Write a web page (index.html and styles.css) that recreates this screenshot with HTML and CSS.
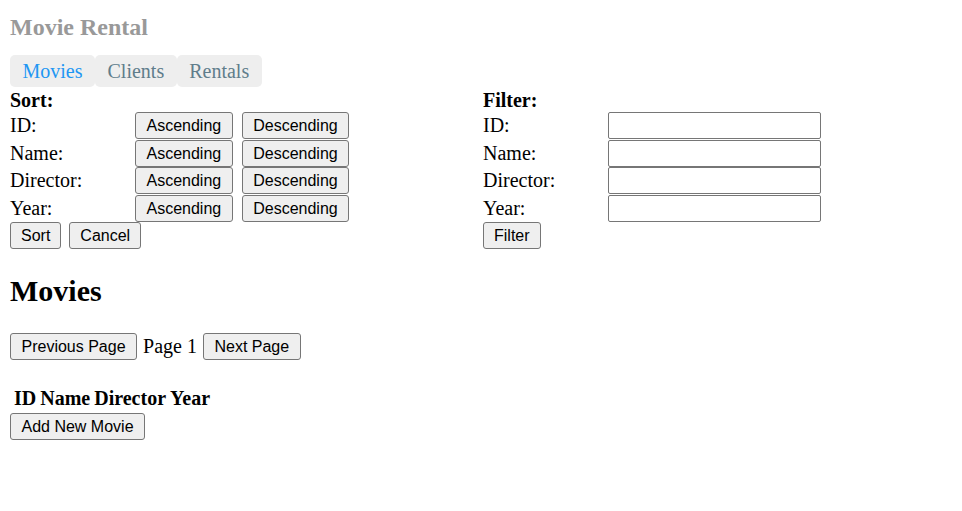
FILE: index.html
```html
<!DOCTYPE html>
<html>
<head>
<meta charset="utf-8">
<link rel="stylesheet" href="styles.css">
</head>
<body>
<div class="app">
  <h1 class="title">Movie Rental</h1>
  <nav class="tabs">
    <span class="tab active">Movies</span>
    <span class="tab">Clients</span>
    <span class="tab">Rentals</span>
  </nav>
  <div class="controls">
    <div class="panel sort">
      <div class="panel-title">Sort:</div>
      <div class="grid">
        <span class="label">ID:</span>
        <span class="pair"><button class="btn">Ascending</button><button class="btn">Descending</button></span>
        <span class="label">Name:</span>
        <span class="pair"><button class="btn">Ascending</button><button class="btn">Descending</button></span>
        <span class="label">Director:</span>
        <span class="pair"><button class="btn">Ascending</button><button class="btn">Descending</button></span>
        <span class="label">Year:</span>
        <span class="pair"><button class="btn">Ascending</button><button class="btn">Descending</button></span>
      </div>
      <div class="actions"><button class="btn">Sort</button><button class="btn">Cancel</button></div>
    </div>
    <div class="panel filter">
      <div class="panel-title">Filter:</div>
      <div class="grid">
        <span class="label">ID:</span><input class="field" type="text">
        <span class="label">Name:</span><input class="field" type="text">
        <span class="label">Director:</span><input class="field" type="text">
        <span class="label">Year:</span><input class="field" type="text">
      </div>
      <div class="actions"><button class="btn">Filter</button></div>
    </div>
  </div>
  <h2 class="heading">Movies</h2>
  <div class="pager">
    <button class="btn">Previous Page</button><span class="page-num">Page 1</span><button class="btn">Next Page</button>
  </div>
  <table class="movies">
    <thead><tr><th>ID</th><th>Name</th><th>Director</th><th>Year</th></tr></thead>
  </table>
  <button class="btn">Add New Movie</button>
</div>
</body>
</html>
```

FILE: styles.css
```css
html, body {
  margin: 0;
  padding: 0;
  background: #fff;
}
body {
  font-family: "Liberation Serif", "Times New Roman", serif;
  font-size: 20px;
  color: #000;
}
.app {
  padding: 13px 10px 0 10px;
}
.title {
  margin: 0;
  font-size: 24px;
  line-height: 28px;
  font-weight: bold;
  color: #999;
}
.tabs {
  display: flex;
  margin-top: 14px;
}
.tab {
  background: #eeeeee;
  border-radius: 5px;
  padding: 4.5px 12.5px;
  line-height: 23px;
  color: #607d8b;
}
.tab.active {
  color: #2196f3;
}
.controls {
  display: flex;
  margin-top: 2px;
}
.panel.sort {
  width: 473px;
}
.panel-title {
  font-weight: bold;
  line-height: 23px;
}
.grid {
  display: grid;
  grid-template-columns: 125px auto;
  grid-auto-rows: 27.5px;
  align-items: center;
  justify-items: start;
}
.label {
  line-height: 23px;
}
.pair {
  display: flex;
  gap: 9px;
}
.btn {
  font-family: "Liberation Sans", Arial, sans-serif;
  font-size: 16px;
  line-height: 19px;
  height: 27px;
  padding: 0 10.5px;
  margin: 0;
  border: 1px solid #767676;
  border-radius: 3px;
  background: #efefef;
  color: #000;
  box-sizing: border-box;
}
.actions .btn {
  padding: 0 10px;
}
.field {
  width: 213px;
  height: 27px;
  box-sizing: border-box;
  margin: 0;
  border: 1px solid #767676;
  border-radius: 2px;
  background: #fff;
  padding: 0 3px;
  font-size: 16px;
}
.actions {
  display: flex;
  gap: 8px;
}
.heading {
  font-size: 30px;
  line-height: 34px;
  font-weight: bold;
  margin: 25px 0 25px;
}
.pager {
  display: flex;
  align-items: center;
}
.page-num {
  margin: 0 6px;
  line-height: 23px;
}
.movies {
  margin: 24px 0 0 1px;
  border-spacing: 2px;
}
.movies th {
  padding: 1px;
  font-weight: bold;
  line-height: 23px;
  text-align: center;
}
```
